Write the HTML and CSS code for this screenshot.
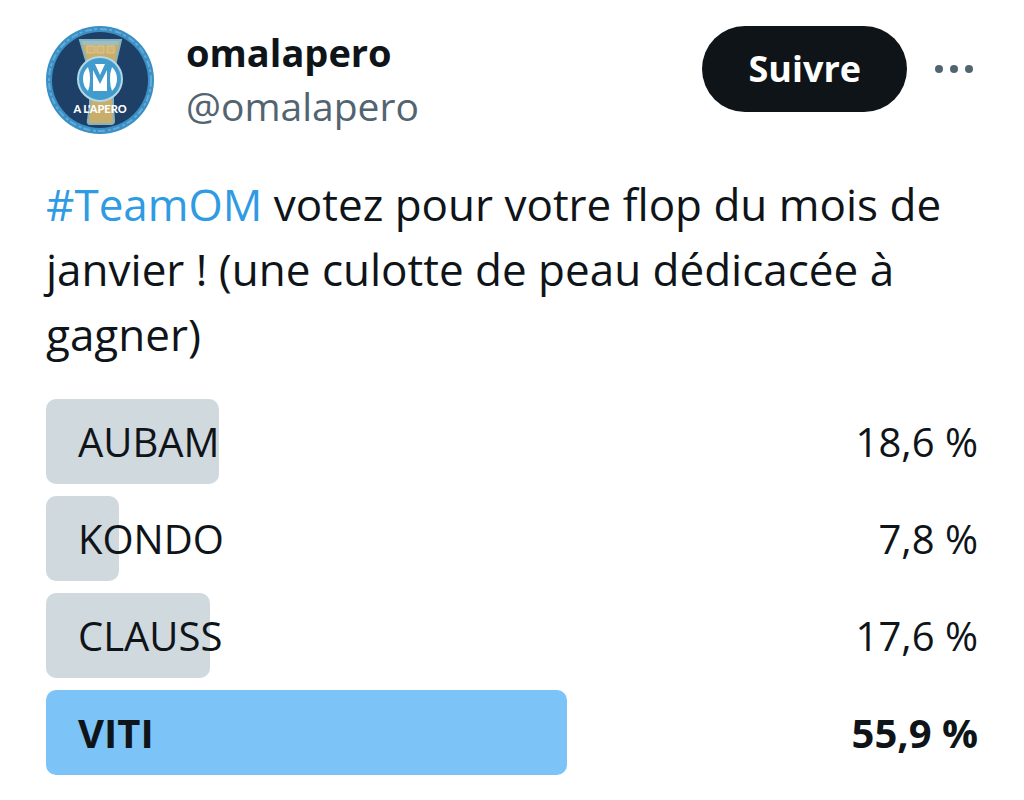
FILE: index.html
```html
<!DOCTYPE html>
<html lang="fr">
<head>
  <meta charset="utf-8">
  <meta name="viewport" content="width=device-width, initial-scale=1">
  <title>omalapero</title>
  <link rel="stylesheet" href="styles.css">
</head>
<body>
<article class="post">
  <header class="post-header">
    <svg class="avatar" viewBox="0 0 108 108" role="img" aria-label="OM à l'apéro">
      <circle cx="54" cy="54" r="54" fill="#3a8fc4"/>
      <circle cx="54" cy="54" r="51" fill="none" stroke="#63abd6" stroke-width="2" stroke-dasharray="7 2 3 3"/>
      <circle cx="54" cy="54" r="48" fill="#1e3f66"/>
      <!-- beer glass -->
      <path d="M34 14H75L67 48V78L68 95Q68 98 65 98H44Q41 98 42 94L44 78V48Z" fill="#c8ae6b" stroke="#86b3c4" stroke-width="2"/>
      <path d="M36 15H73L72 19H37Z" fill="#9dbfc4"/>
      <path d="M41 20h8v7h-8zM51 20h7v7h-7zM61 20h7v7h-7z" fill="#d0b574" stroke="#dcc690"/>
      <!-- club badge -->
      <circle cx="54" cy="53" r="22" fill="#429bcd" stroke="#b3d7e6" stroke-width="2"/>
      <path d="M42 41Q37 46 37 53T42 65Q44 60 44 53T42 41ZM66 41Q71 46 71 53T66 65Q64 60 64 53T66 41Z" fill="#fff"/>
      <path d="M49 38H59L54 49Z" fill="#fff"/>
      <path d="M47 44L54 58L61 44V65H47Z" fill="#fff"/>
      <text class="avatar-text" x="54" y="87" text-anchor="middle">A L'APERO</text>
    </svg>
    <div class="author">
      <strong class="name">omalapero</strong>
      <span class="handle">@omalapero</span>
    </div>
    <div class="actions">
      <button type="button" class="follow">Suivre</button>
      <button type="button" class="more" aria-label="Plus">
        <svg viewBox="0 0 38 10" width="38" height="10">
          <circle cx="4" cy="5" r="4"/>
          <circle cx="19" cy="5" r="4"/>
          <circle cx="34" cy="5" r="4"/>
        </svg>
      </button>
    </div>
  </header>

  <p class="message"><a href="#TeamOM">#TeamOM</a> votez pour votre flop du mois de janvier ! (une culotte de peau dédicacée à gagner)</p>

  <ul class="poll">
    <li class="choice">
      <div class="bar" style="width: 18.6%"></div>
      <span class="label">AUBAM</span>
      <span class="percent">18,6 %</span>
    </li>
    <li class="choice">
      <div class="bar" style="width: 7.8%"></div>
      <span class="label">KONDO</span>
      <span class="percent">7,8 %</span>
    </li>
    <li class="choice">
      <div class="bar" style="width: 17.6%"></div>
      <span class="label">CLAUSS</span>
      <span class="percent">17,6 %</span>
    </li>
    <li class="choice winner">
      <div class="bar" style="width: 55.9%"></div>
      <span class="label">VITI</span>
      <span class="percent">55,9 %</span>
    </li>
  </ul>
</article>
</body>
</html>
```
FILE: styles.css
```css
* {
  box-sizing: border-box;
}

body {
  margin: 0;
  background-color: #fff;
  color: #0f1419;
  font-family: "Open Sans", "Noto Sans", sans-serif;
}

.post {
  padding: 26px 46px;
}

.post-header {
  display: flex;
  align-items: flex-start;
}

.avatar {
  width: 108px;
  height: 108px;
  flex: none;
}

.avatar-text {
  font-family: Lato, sans-serif;
  font-size: 11px;
  font-weight: 900;
  fill: #fff;
}

.author {
  display: flex;
  flex-direction: column;
  flex: 1;
  margin-left: 32px;
  line-height: 53px;
}

.name {
  font-size: 38px;
  font-weight: 700;
}

.handle {
  font-size: 39px;
  color: #536471;
}

.actions {
  display: flex;
  align-items: center;
  gap: 28px;
}

.follow {
  height: 86px;
  padding: 0 46px;
  border: none;
  border-radius: 43px;
  background-color: #0f1419;
  color: #fff;
  font: 700 36px/1 "Open Sans", sans-serif;
  cursor: pointer;
}

.more {
  display: flex;
  padding: 0;
  margin-right: 5px;
  border: none;
  background: none;
  fill: #536471;
  cursor: pointer;
}

.message {
  margin: 38px 0 32px;
  font-size: 44px;
  line-height: 65px;
}

.message a {
  color: #2f9be3;
  text-decoration: none;
}

.poll {
  display: grid;
  gap: 12px;
  margin: 0;
  padding: 0;
  list-style: none;
  font-size: 40px;
  line-height: 48px;
}

/* bar and text share the same cell so the label sits over the bar */
.choice {
  display: grid;
  align-items: center;
  height: 85px;
}

.choice > * {
  grid-area: 1 / 1;
}

.bar {
  height: 100%;
  border-radius: 10px;
  background-color: #cfd9de;
}

.label {
  padding-left: 32px;
}

.percent {
  justify-self: end;
}

.winner {
  font-weight: 700;
}

.winner .bar {
  background-color: #7cc4f8;
}
```
